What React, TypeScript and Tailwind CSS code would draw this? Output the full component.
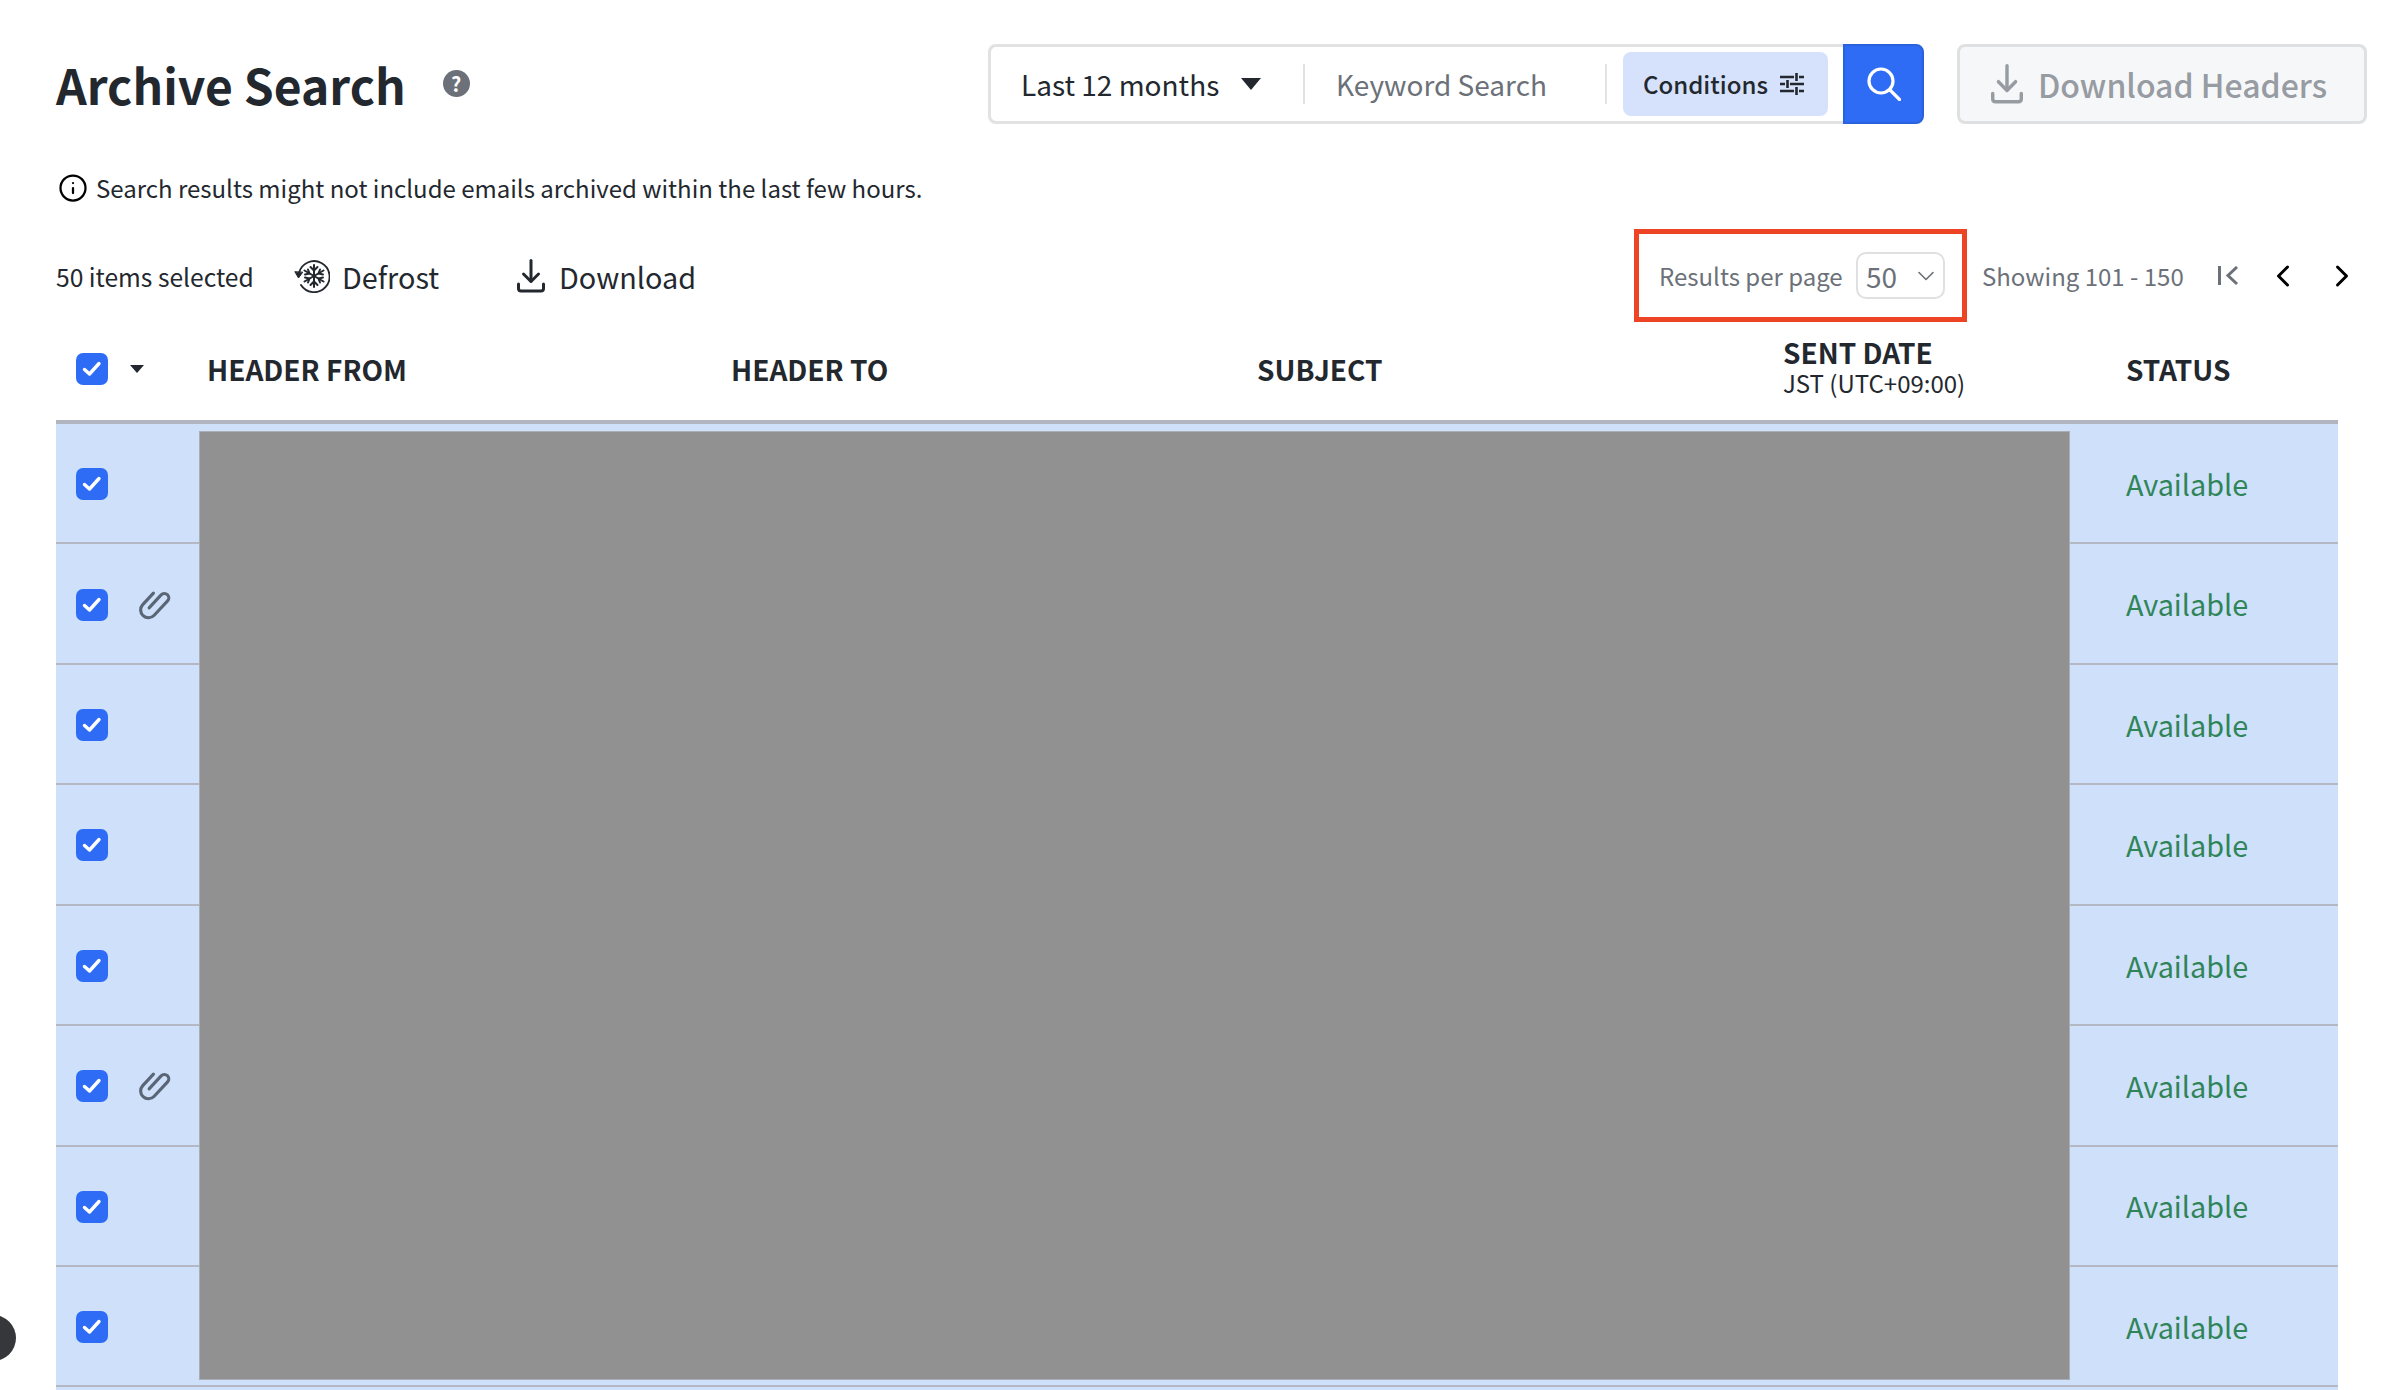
import { Info, ChevronDown, ChevronLeft, ChevronRight } from 'lucide-react';

function Checkbox() {
  return (
    <div className="flex h-[32px] w-[32px] items-center justify-center rounded-[7px] bg-[#2e6cf6]">
      <svg width="22" height="22" viewBox="0 0 22 22" fill="none" stroke="#fff" strokeWidth="3.4" strokeLinecap="round" strokeLinejoin="round">
        <path d="M3.5 11.5 L8.5 16 L18 5.5" />
      </svg>
    </div>
  );
}

function DownloadIcon({ width, height, color }: { width: number; height: number; color: string }) {
  return (
    <svg width={width} height={height} viewBox="0 0 28 34" fill="none" stroke={color} strokeWidth="3" strokeLinecap="round" strokeLinejoin="round" preserveAspectRatio="none">
      <path d="M14 1.5 V22" />
      <path d="M6.5 15 L14 22.5 L21.5 15" />
      <path d="M1.5 25 V29.5 Q1.5 32 4 32 H24 Q26.5 32 26.5 29.5 V25" />
    </svg>
  );
}

function DefrostIcon() {
  return (
    <svg width="36" height="34" viewBox="0 0 36 34" fill="none" stroke="#23282f" strokeLinecap="round">
      <path d="M5 14 A15.5 15.5 0 1 1 7 26" strokeWidth="1.9" />
      <path d="M1 13 L4.5 19 L8.5 13.5 Z" fill="#23282f" strokeWidth="1" />
      <g strokeWidth="2">
        <path d="M20 6 V28" />
        <path d="M10.5 11.5 L29.5 22.5" />
        <path d="M10.5 22.5 L29.5 11.5" />
        <path d="M16.5 8 L20 11.5 L23.5 8" />
        <path d="M16.5 26 L20 22.5 L23.5 26" />
        <path d="M11 15.5 L15.5 14.5 L14 10.5" />
        <path d="M29 15.5 L24.5 14.5 L26 10.5" />
        <path d="M11 18.5 L15.5 19.5 L14 23.5" />
        <path d="M29 18.5 L24.5 19.5 L26 23.5" />
      </g>
    </svg>
  );
}

function Clip() {
  return (
    <svg width="40" height="40" viewBox="-20 -20 40 40" fill="none" stroke="#5a6675" strokeWidth="3.2" strokeLinecap="round">
      <g transform="rotate(43) scale(0.98) translate(0.5 -1.75)">
        <path d="M-1.5 8 V-10 A4.5 4.5 0 0 1 7.5 -10 V10 A8 8 0 0 1 -8.5 10 V-6" />
      </g>
    </svg>
  );
}

const rows = [false, true, false, false, false, true, false, false];

export default function App() {
  return (
    <div className="relative h-[1390px] overflow-hidden bg-white pt-[44px] font-['Noto_Sans_CJK_JP',sans-serif] text-[#23282f]">
      {/* top bar */}
      <div className="flex h-[80px] items-center pl-[56px] pr-[21px]">
        <h1 className="text-[48px] font-semibold leading-[80px]">Archive Search</h1>
        <div className="ml-[37px] mt-[-1px] flex h-[27px] w-[27px] items-center justify-center rounded-full bg-[#6c7179] text-[20px] font-bold leading-none text-white">?</div>
        <div className="ml-auto flex h-[80px] w-[936px]">
          <div className="flex flex-1 items-center rounded-l-[8px] border-[3px] border-r-0 border-[#e2e2e2] bg-white">
            <span className="ml-[30px] w-[197px] whitespace-nowrap text-[28px] leading-none">Last 12 months</span>
            <div className="ml-[23px] h-0 w-0 border-x-[10px] border-t-[12px] border-x-transparent border-t-[#23282f]" />
            <div className="ml-[42px] h-[40px] w-[2px] bg-[#e2e2e2]" />
            <span className="ml-[31px] w-[209px] whitespace-nowrap text-[28px] leading-none text-[#6c7179]">Keyword Search</span>
            <div className="ml-[60px] h-[40px] w-[2px] bg-[#e2e2e2]" />
            <div className="ml-[16px] flex h-[64px] w-[205px] items-center rounded-[8px] bg-[#d6e2fb] pl-[20px]">
              <span className="w-[124px] whitespace-nowrap text-[24px] font-medium leading-none">Conditions</span>
              <svg className="ml-[13px]" width="24" height="22" viewBox="0 0 24 22" fill="none" stroke="#23282f" strokeWidth="2.6">
                <path d="M0 4 H14 M19 4 H24 M16.5 0 V8" />
                <path d="M0 11 H5 M10 11 H24 M7.5 7 V15" />
                <path d="M0 18 H14 M19 18 H24 M16.5 14 V22" />
              </svg>
            </div>
          </div>
          <div className="flex w-[81px] items-center justify-center rounded-r-[8px] border-[2px] border-[#2a62de] bg-[#2e6cf6]">
            <svg width="34" height="34" viewBox="0 0 34 34" fill="none" stroke="#fff" strokeWidth="3.2" strokeLinecap="round">
              <circle cx="14" cy="14" r="12" />
              <path d="M23 23 L32.5 32.5" />
            </svg>
          </div>
        </div>
        <div className="ml-[33px] flex h-[80px] w-[410px] items-center rounded-[8px] border-[3px] border-[#dfe0e2] bg-[#f6f7f9] pl-[31px] text-[#979ba2]">
          <DownloadIcon width={32} height={40} color="#979ba2" />
          <span className="ml-[15px] whitespace-nowrap text-[32px] font-medium leading-none">Download Headers</span>
        </div>
      </div>

      {/* info */}
      <div className="ml-[58px] mt-[50px] flex h-[28px] items-center">
        <Info size={30} color="#000" strokeWidth={1.8} />
        <span className="ml-[8px] whitespace-nowrap text-[24px] leading-none">Search results might not include emails archived within the last few hours.</span>
      </div>

      {/* toolbar */}
      <div className="mt-[27px] flex h-[93px] items-center pl-[56px] pr-[28px]">
        <span className="mt-[2px] w-[197px] whitespace-nowrap text-[24.6px] leading-none">50 items selected</span>
        <div className="ml-[41px]"><DefrostIcon /></div>
        <span className="ml-[12px] mt-[3px] w-[96px] whitespace-nowrap text-[28.8px] leading-none">Defrost</span>
        <div className="ml-[79px]"><DownloadIcon width={28} height={34} color="#23282f" /></div>
        <span className="ml-[14px] mt-[3px] whitespace-nowrap text-[28.8px] leading-none">Download</span>

        <div className="ml-auto flex h-[93px] w-[333px] items-center border-[5px] border-[#ee4426] pl-[20px] text-[#6c7179]">
          <span className="w-[184px] whitespace-nowrap text-[24px] leading-none">Results per page</span>
          <div className="ml-[13px] flex h-[47px] w-[89px] items-center rounded-[10px] border-[2px] border-[#dfe0e2] pl-[8px]">
            <span className="text-[28px] leading-none">50</span>
            <ChevronDown className="ml-auto mr-[3px]" size={28} strokeWidth={1.4} />
          </div>
        </div>
        <span className="ml-[15px] w-[203px] whitespace-nowrap text-[24px] leading-none text-[#6c7179]">Showing 101 - 150</span>
        <svg className="ml-[33px]" width="21" height="20" viewBox="0 0 21 20" fill="none" stroke="#6c7179" strokeWidth="3">
          <path d="M1.5 0 V19" />
          <path d="M19 1 L10 9.5 L19 18" />
        </svg>
        <ChevronLeft className="ml-[26px]" size={36} color="#000" strokeWidth={2} />
        <ChevronRight className="ml-[23px]" size={36} color="#000" strokeWidth={2} />
      </div>

      {/* table */}
      <div className="ml-[56px] w-[2282px]">
        <div className="flex h-[98px] items-center pb-[4px] text-[28px] font-semibold leading-none">
          <div className="flex w-[151px] items-center pl-[20px]">
            <Checkbox />
            <div className="ml-[22px] h-0 w-0 border-x-[7px] border-t-[8px] border-x-transparent border-t-[#23282f]" />
          </div>
          <div className="w-[524px]">HEADER FROM</div>
          <div className="w-[526px]">HEADER TO</div>
          <div className="w-[526px]">SUBJECT</div>
          <div className="mt-[-8px] flex w-[343px] flex-col">
            <span className="leading-[36px]">SENT DATE</span>
            <span className="text-[24px] font-normal leading-[26px]">JST (UTC+09:00)</span>
          </div>
          <div>STATUS</div>
        </div>
        <div className="relative border-t-[4px] border-[#b0b5bf] bg-[#cfe0fb] pb-[4px]">
          {rows.map((hasClip, i) => (
            <div key={i} className="flex h-[120.43px] items-center border-b-[2px] border-[#b3b8c2] pt-[2px]">
              <div className="flex w-[2070px] items-center pl-[20px]">
                <Checkbox />
                {hasClip && <div className="ml-[26px] mt-[-2px]"><Clip /></div>}
              </div>
              <span className="text-[28.8px] leading-none text-[#2f8558]">Available</span>
            </div>
          ))}
          <div className="absolute left-[143px] top-[7px] h-[949px] w-[1871px] border border-[#a9adb5] bg-[#919191]" />
        </div>
      </div>

      <div className="absolute left-[-30px] top-[1315px] h-[46px] w-[46px] rounded-full bg-[#36373b]" />
    </div>
  );
}
